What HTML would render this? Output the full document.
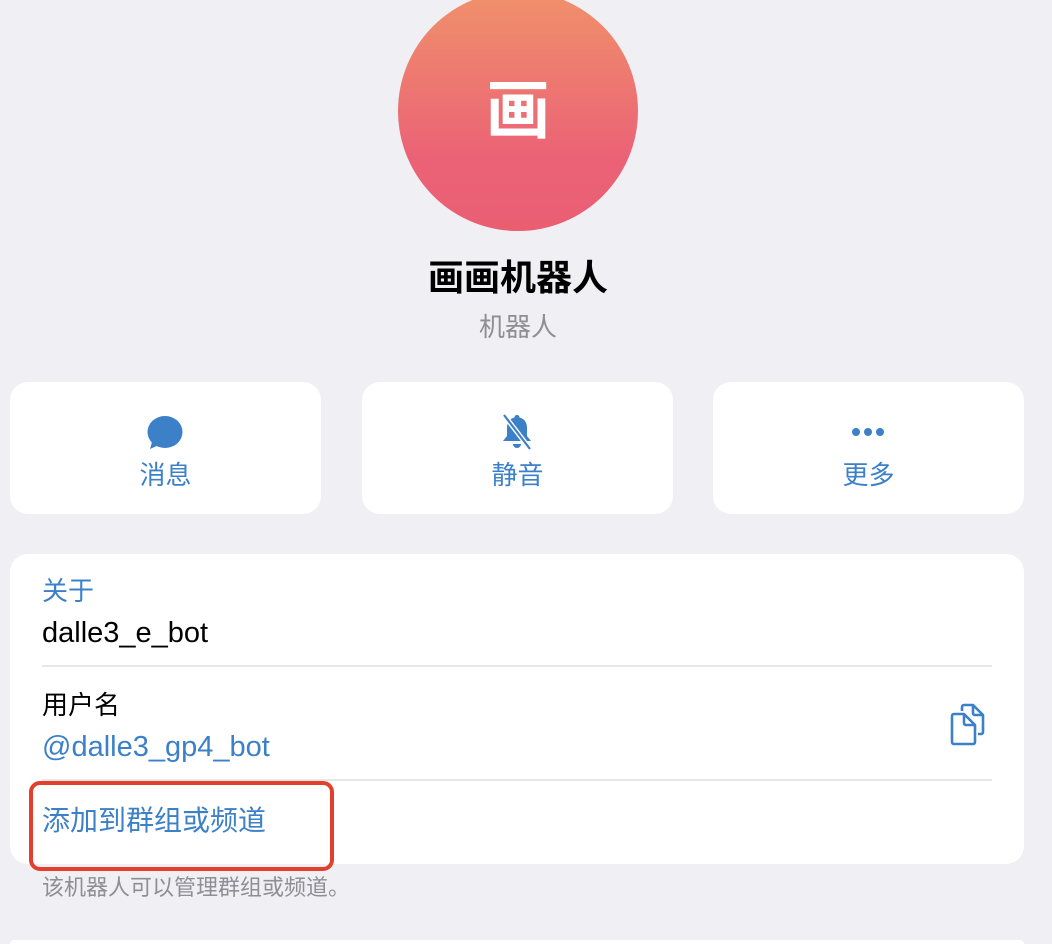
<!DOCTYPE html>
<html><head><meta charset="utf-8"><style>
html,body{margin:0;width:1052px;height:944px;overflow:hidden}
body{background:#efeff4;position:relative;font-family:"Liberation Sans","Noto Sans CJK SC",sans-serif;}
.abs{position:absolute}
.av{left:398px;top:-9px;width:240px;height:240px;border-radius:50%;background:linear-gradient(#f0916b,#eb6276 70%,#ea5e72);color:#fff;font-size:64px;font-weight:bold;text-align:center;line-height:240px}
.btn{top:382px;width:311px;height:132px;background:#fff;border-radius:18px;color:#3c80c8;font-size:26px;text-align:center}
.btn .lbl{position:absolute;top:78px;left:0;right:0;line-height:30px}
.btn svg{position:absolute;left:135px;top:30px}
.card{left:10px;top:554px;width:1014px;height:310px;background:#fff;border-radius:18px}
.sep{left:42px;width:950px;height:2px;background:#e6e6e9}
.t{left:42px;font-size:26px;line-height:30px}
.l{font-size:29px}
</style></head><body>
<div class="abs av">画</div>
<div class="abs" style="left:0;width:1036px;top:256px;text-align:center;font-size:36px;font-weight:bold;color:#000;line-height:44px">画画机器人</div>
<div class="abs" style="left:0;width:1036px;top:312px;text-align:center;font-size:26px;color:#8e8e93;line-height:30px">机器人</div>

<div class="abs btn" style="left:10px"><svg width="40" height="40" viewBox="0 0 40 40"><ellipse cx="20" cy="20" rx="17.5" ry="16" fill="#3c80c8"/><path d="M7 30 L5 37 L14 33Z" fill="#3c80c8"/></svg><div class="lbl">消息</div></div>
<div class="abs btn" style="left:362px"><svg width="40" height="40" viewBox="0 0 40 40"><path d="M20 3c-1.5 0-2.5 1-2.5 2.5C12 7 10 11 10 16v8l-4 5h28l-4-5v-8c0-5-2-9-7.5-10.5C22.5 4 21.5 3 20 3z" fill="#3c80c8"/><path d="M16 32a4 4 0 0 0 8 0z" fill="#3c80c8"/><path d="M7 3 L33 37" stroke="#fff" stroke-width="5"/><path d="M7 3 L33 37" stroke="#3c80c8" stroke-width="2.2"/></svg><div class="lbl">静音</div></div>
<div class="abs btn" style="left:713px"><svg width="40" height="40" viewBox="0 0 40 40"><circle cx="8" cy="20" r="4" fill="#3c80c8"/><circle cx="20" cy="20" r="4" fill="#3c80c8"/><circle cx="32" cy="20" r="4" fill="#3c80c8"/></svg><div class="lbl">更多</div></div>

<div class="abs card"></div>
<div class="abs t" style="top:576px;color:#3c80c8">关于</div>
<div class="abs t l" style="top:618px;color:#000">dalle3_e_bot</div>
<div class="abs sep" style="top:665px"></div>
<div class="abs t" style="top:690px;color:#000">用户名</div>
<div class="abs t l" style="top:732px;color:#3c80c8">@dalle3_gp4_bot</div>
<svg class="abs" style="left:946px;top:702px" width="46" height="46" viewBox="0 0 46 46" fill="none" stroke="#3c80c8" stroke-width="2.6" stroke-linejoin="round"><path d="M16 9 V5 a2 2 0 0 1 2-2 h9 l10 10 v17 a2 2 0 0 1-2 2 h-3"/><path d="M27 3 v8 a2 2 0 0 0 2 2 h8"/><path d="M6 14 a2 2 0 0 1 2-2 h10 l11 11 v17 a2 2 0 0 1-2 2 H8 a2 2 0 0 1-2-2z"/><path d="M18 12 v9 a2 2 0 0 0 2 2 h9"/></svg>
<div class="abs sep" style="top:779px"></div>
<div class="abs t" style="top:806px;color:#3c80c8;font-size:28px">添加到群组或频道</div>
<div class="abs" style="left:29px;top:781px;width:297px;height:82px;border:4px solid #e2402d;border-radius:11px"></div>
<div class="abs" style="left:42px;top:873px;font-size:22px;color:#8e8e93;line-height:30px">该机器人可以管理群组或频道。</div>
<div class="abs" style="left:10px;top:940px;width:1014px;height:4px;background:#fff;border-radius:18px 18px 0 0"></div>
</body></html>
